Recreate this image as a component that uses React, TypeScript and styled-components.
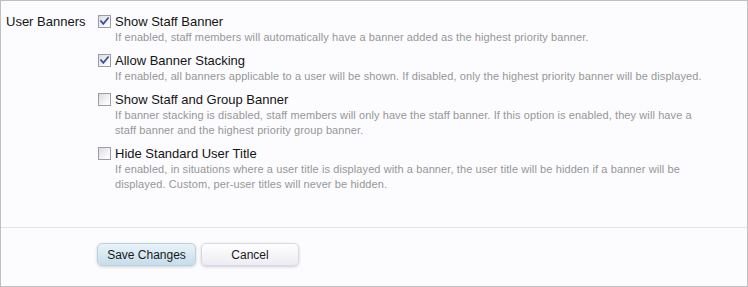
import React from "react";
import styled, { createGlobalStyle } from "styled-components";

const GlobalStyle = createGlobalStyle`
  html, body { margin: 0; padding: 0; background: #fcfcff; }
  * { box-sizing: border-box; }
`;

const Form = styled.form`
  width: 748px;
  height: 287px;
  border: 1px solid #bfbfbf;
  background: #fcfcff;
  display: flex;
  flex-direction: column;
  font-family: "Liberation Sans", Arial, sans-serif;
`;

const FieldRow = styled.div`
  display: grid;
  grid-template-columns: 97px 1fr;
  padding-top: 12px;
  padding-bottom: 35px;
`;

const FieldLabel = styled.div`
  font-size: 13px;
  line-height: 17px;
  color: #141414;
  padding-left: 5px;
`;

const OptionList = styled.ul`
  list-style: none;
  margin: 0;
  padding: 0;
  display: flex;
  flex-direction: column;
  gap: 7px;
`;

const Option = styled.li`
  display: flex;
  flex-direction: column;
`;

const OptionLabel = styled.label`
  display: flex;
  align-items: center;
  gap: 4px;
  font-size: 13px;
  line-height: 17px;
  color: #141414;
`;

const Box = styled.span<{ $checked: boolean }>`
  width: 13px;
  height: 13px;
  border: 1px solid #9c9ca6;
  background: linear-gradient(135deg, #dcdcdc 0%, #f4f4f4 60%, #ffffff 100%);
  display: inline-flex;
  align-items: center;
  justify-content: center;
  flex: none;
`;

const Hint = styled.p`
  margin: 0;
  padding-left: 17px;
  font-size: 11px;
  line-height: 15px;
  letter-spacing: 0.1px;
  color: #969696;
  width: 610px;
`;

const ButtonBar = styled.div`
  border-top: 1px solid #dde6ea;
  padding: 15px 0 0 96px;
  display: flex;
  gap: 5px;
`;

const Button = styled.button<{ $primary?: boolean }>`
  height: 23px;
  width: ${(p) => (p.$primary ? "99px" : "98px")};
  border-radius: 5px;
  border: 1px solid ${(p) => (p.$primary ? "#bcd2df" : "#d8d8e2")};
  background: ${(p) =>
    p.$primary
      ? "linear-gradient(#e9f3f9, #c6ddeb)"
      : "linear-gradient(#ffffff, #ececf3)"};
  box-shadow: 0 1px 3px rgba(0, 0, 0, 0.18);
  font-family: "Liberation Sans", Arial, sans-serif;
  font-size: 12px;
  color: #1a1a1a;
  padding: 0;
  cursor: pointer;
`;

const Check = () => (
  <svg width="11" height="11" viewBox="0 0 11 11">
    <path d="M2 5.2 L4.3 7.8 L9 2.2" fill="none" stroke="#3553a3" strokeWidth="1.8" strokeLinecap="square" />
  </svg>
);

const options = [
  {
    title: "Show Staff Banner",
    checked: true,
    hint: "If enabled, staff members will automatically have a banner added as the highest priority banner.",
  },
  {
    title: "Allow Banner Stacking",
    checked: true,
    hint: "If enabled, all banners applicable to a user will be shown. If disabled, only the highest priority banner will be displayed.",
  },
  {
    title: "Show Staff and Group Banner",
    checked: false,
    hint: "If banner stacking is disabled, staff members will only have the staff banner. If this option is enabled, they will have a staff banner and the highest priority group banner.",
  },
  {
    title: "Hide Standard User Title",
    checked: false,
    hint: "If enabled, in situations where a user title is displayed with a banner, the user title will be hidden if a banner will be displayed. Custom, per-user titles will never be hidden.",
  },
];

export default function App() {
  return (
    <>
      <GlobalStyle />
      <Form onSubmit={(e) => e.preventDefault()}>
        <FieldRow>
          <FieldLabel>User Banners</FieldLabel>
          <OptionList>
            {options.map((o) => (
              <Option key={o.title}>
                <OptionLabel>
                  <Box $checked={o.checked}>{o.checked && <Check />}</Box>
                  {o.title}
                </OptionLabel>
                <Hint>{o.hint}</Hint>
              </Option>
            ))}
          </OptionList>
        </FieldRow>
        <ButtonBar>
          <Button $primary type="submit">Save Changes</Button>
          <Button type="button">Cancel</Button>
        </ButtonBar>
      </Form>
    </>
  );
}
